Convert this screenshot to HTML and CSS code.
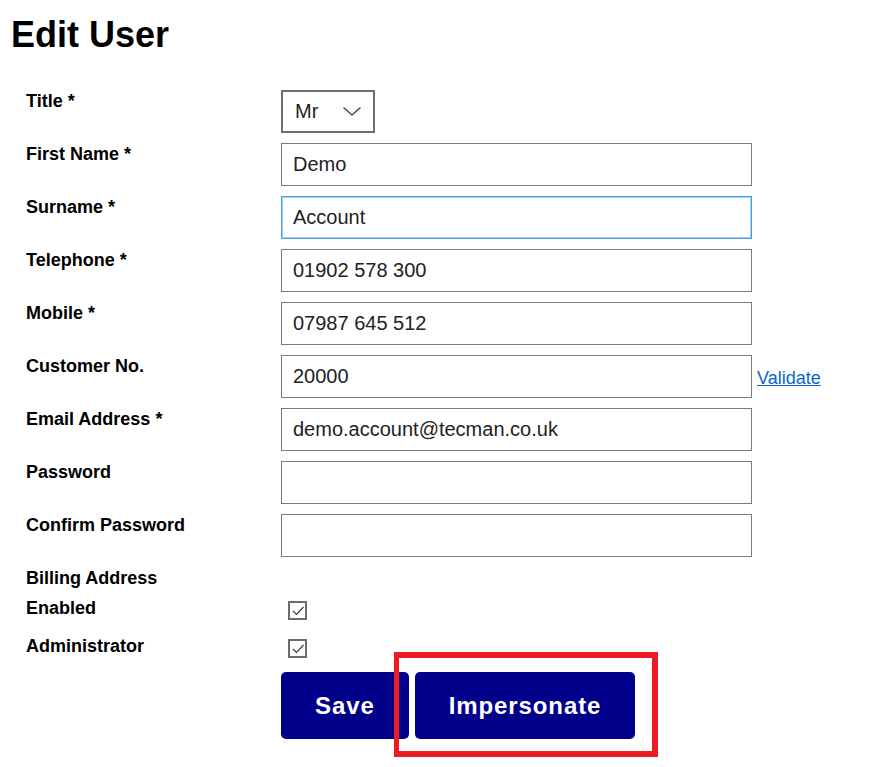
FILE: index.html
```html
<!DOCTYPE html>
<html lang="en">
<head>
<meta charset="utf-8">
<title>Edit User</title>
<link rel="stylesheet" href="styles.css">
</head>
<body>
<div class="page">
  <h1 class="title">Edit User</h1>
  <form class="form">
    <div class="row">
      <label class="label">Title *</label>
      <div class="select">
        <span>Mr</span>
        <svg class="chev" width="18" height="9" viewBox="0 0 18 9"><path d="M0.5 0.5 L9 8 L17.5 0.5" fill="none" stroke="#333" stroke-width="1.1"/></svg>
      </div>
    </div>
    <div class="row">
      <label class="label">First Name *</label>
      <input class="input" type="text" value="Demo">
    </div>
    <div class="row">
      <label class="label">Surname *</label>
      <input class="input focus" type="text" value="Account">
    </div>
    <div class="row">
      <label class="label">Telephone *</label>
      <input class="input" type="text" value="01902 578 300">
    </div>
    <div class="row">
      <label class="label">Mobile *</label>
      <input class="input" type="text" value="07987 645 512">
    </div>
    <div class="row">
      <label class="label">Customer No.</label>
      <input class="input" type="text" value="20000">
      <a class="validate" href="#">Validate</a>
    </div>
    <div class="row">
      <label class="label">Email Address *</label>
      <input class="input" type="text" value="demo.account@tecman.co.uk">
    </div>
    <div class="row">
      <label class="label">Password</label>
      <input class="input" type="password" value="">
    </div>
    <div class="row">
      <label class="label">Confirm Password</label>
      <input class="input" type="password" value="">
    </div>
    <div class="row row-billing">
      <label class="label">Billing Address</label>
    </div>
    <div class="row row-check">
      <label class="label">Enabled</label>
      <span class="check"><svg width="14" height="14" viewBox="0 0 14 14"><path d="M2 7 L5.5 10.5 L12.5 3" fill="none" stroke="#3a3a3a" stroke-width="1.2"/></svg></span>
    </div>
    <div class="row row-check2">
      <label class="label">Administrator</label>
      <span class="check"><svg width="14" height="14" viewBox="0 0 14 14"><path d="M2 7 L5.5 10.5 L12.5 3" fill="none" stroke="#3a3a3a" stroke-width="1.2"/></svg></span>
    </div>
    <div class="actions">
      <button class="btn" type="button">Save</button>
      <div class="hl-wrap">
        <button class="btn" type="button">Impersonate</button>
        <span class="highlight"></span>
      </div>
    </div>
  </form>
</div>
</body>
</html>
```

FILE: styles.css
```css
html, body {
  margin: 0;
  padding: 0;
  background: #fff;
}
body {
  font-family: "Liberation Sans", Arial, sans-serif;
  color: #000;
}
.page {
  padding-top: 14px;
  padding-bottom: 28px;
}
.title {
  margin: 0 0 35px 0;
  padding-left: 11px;
  font-size: 36px;
  font-weight: bold;
  line-height: 41px;
}
.form {
  display: flex;
  flex-direction: column;
  gap: 10px;
  padding-left: 26px;
}
.row {
  display: flex;
  align-items: flex-start;
}
.label {
  width: 255px;
  flex: none;
  padding-top: 1px;
  font-size: 18px;
  font-weight: bold;
  line-height: 21px;
}
.input {
  box-sizing: border-box;
  width: 471px;
  height: 43px;
  margin: 0;
  padding: 0 11px;
  border: 1px solid #7a7a7a;
  border-radius: 0;
  font-family: "Liberation Sans", Arial, sans-serif;
  font-size: 20px;
  color: #222;
  background: #fff;
  outline: none;
}
.input.focus {
  border-color: #3b9fdb;
  box-shadow: inset 0 0 0 1px #a9d5f1;
}
.select {
  box-sizing: border-box;
  width: 94px;
  height: 43px;
  border: 2px solid #6f6f6f;
  display: flex;
  align-items: center;
  justify-content: space-between;
  padding: 0 12px 0 12px;
  font-size: 20px;
  color: #222;
}
.chev {
  display: block;
}
.validate {
  margin-left: 5px;
  align-self: center;
  padding-top: 3px;
  font-size: 18px;
  color: #0a66cc;
  text-decoration: underline;
}
.row-billing {
  height: 20px;
}
.row-check {
  height: 28px;
}
.row-check2 {
  height: 27px;
}
.check {
  box-sizing: border-box;
  width: 19px;
  height: 19px;
  margin-left: 7px;
  margin-top: 4px;
  border: 2px solid #6b6b6b;
  display: flex;
  align-items: center;
  justify-content: center;
  background: #fff;
}
.check svg {
  display: block;
}
.actions {
  display: flex;
  gap: 6px;
  padding-left: 255px;
}
.btn {
  display: block;
  box-sizing: border-box;
  height: 67px;
  padding: 0 34px;
  border: none;
  border-radius: 5px;
  background: #00008b;
  color: #fff;
  font-family: "Liberation Sans", Arial, sans-serif;
  font-size: 24px;
  font-weight: bold;
  letter-spacing: 0.9px;
  cursor: pointer;
}
.hl-wrap {
  position: relative;
  height: 67px;
}
.highlight {
  position: absolute;
  left: -21px;
  right: -23px;
  top: -20px;
  bottom: -18px;
  border: 6px solid #ed1c24;
  border-left-width: 5px;
  pointer-events: none;
}
```
